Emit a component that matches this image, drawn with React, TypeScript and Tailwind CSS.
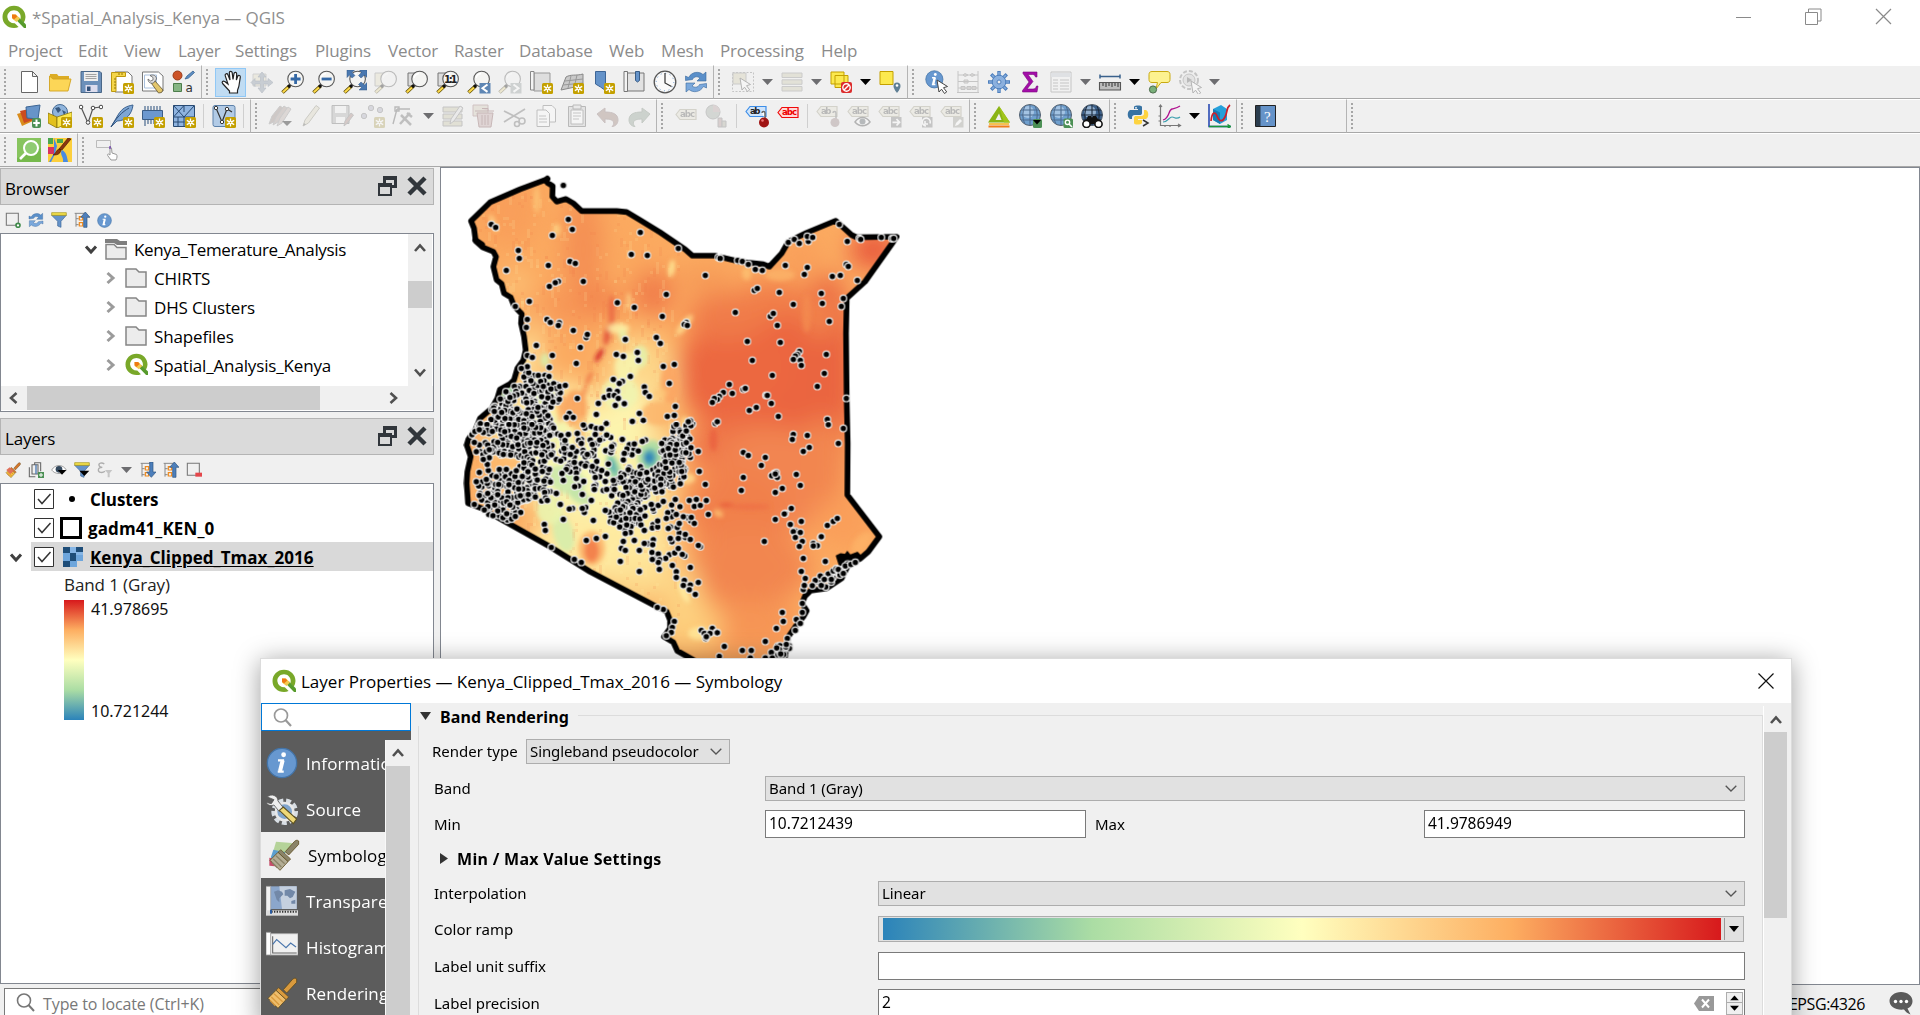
import React from "react";

type Kids = { children?: React.ReactNode };

/* ---------- icon helpers ---------- */

function Svg({ children, off, s = 24 }: Kids & { off?: boolean; s?: number }) {
  return (
    <svg width={s} height={s} viewBox="0 0 24 24" fill="none" className={off ? "shrink-0 opacity-35 grayscale-[55%]" : "shrink-0"}>
      {children}
    </svg>
  );
}

const Star = () => (
  <g>
    <rect x="13" y="13" width="11" height="11" rx="1.5" fill="#c4a000" />
    <path d="M18.5 14.5v8M14.8 16.4l7.4 4.2M14.8 20.6l7.4-4.2" stroke="#fff" strokeWidth="1.3" />
    <circle cx="18.5" cy="18.5" r="1.8" fill="#fff" />
    <circle cx="18.5" cy="18.5" r=".8" fill="#c4a000" />
  </g>
);

const Lens = ({ children }: Kids) => (
  <g>
    <path d="M8.5 16L1.5 22.5" stroke="#5b4a00" strokeWidth="3.6" />
    <path d="M7 17.5L1.8 22.2" stroke="#fcd94a" strokeWidth="2.2" />
    <path d="M9.6 14.4L7.2 17" stroke="#111" strokeWidth="3" />
    <circle cx="14.6" cy="9" r="7.8" fill="#f4f4f2" stroke="#585858" strokeWidth="1.1" />
    <path d="M9 8a6 6 0 0 1 5-4.5" stroke="#fff" strokeWidth="1.4" />
    {children}
  </g>
);

const Tag = ({ f = "#e8e2b8", s = "#a39c6a", t = "#555", label = "abc" }: { f?: string; s?: string; t?: string; label?: string }) => (
  <g>
    <path d="M1 7.5L5 2.500h16v10H5z" fill={f} stroke={s} strokeWidth="1.2" />
    <text x="5" y="10.4" fontSize="8.6" fontWeight="700" fontFamily="DejaVu Sans, sans-serif" textLength={label === "ab" ? 10.5 : 15} fill={t}>{label}</text>
  </g>
);

const Globe = ({ dark }: { dark?: boolean }) => (
  <g>
    <circle cx="12" cy="11" r="10.500" fill={dark ? "#3a5f8a" : "#6f9fce"} stroke="#55606c" />
    <circle cx="10" cy="8" r="6" fill="#b9d3ec" opacity=".7" />
    <path d="M1.500 11h21M3 6h18M3 16h18M12 1v20M7 2c-3 5-3 13 0 18M17 2c3 5 3 13 0 18" stroke={dark ? "#1c2a3c" : "#4d6c90"} strokeWidth="1.1" />
  </g>
);

const Cursor = ({ x = 12, y = 10 }: { x?: number; y?: number }) => (
  <path transform={`translate(${x} ${y})`} d="M0 0l10.5 6.5-4 1.2 3.2 4.2-2.2 1.6-3-4.3L2 12z" fill="#fff" stroke="#444" strokeWidth="1" />
);

const Pencil = () => (
  <g>
    <path d="M4 22l2-6L17 1.5l3.5 2.5L9.500 19z" fill="#e0d7a0" stroke="#8c8660" />
    <path d="M4 22l1-3 2 1.500z" fill="#555" />
  </g>
);

const QLogo = ({ s = 24 }: { s?: number }) => (
  <Svg s={s}>
    <path d="M12 .8C5.500.8.5 5.700.5 12s5 11 11.5 11c1.700 0 3.200-.3 4.600-.9l-3.800-3.800A7 7 0 0 1 5.300 12c0-3.800 3-6.700 6.700-6.700s6.700 2.900 6.700 6.700c0 .9-.1 1.600-.4 2.300l3.400 3.400A11 11 0 0 0 23.500 12C23.500 5.700 18.500.8 12 .8z" fill="#79a829" />
    <path d="M15 12.500v3.200L22 23h2v-3.600l-7-7z" fill="#579b2c" />
    <path d="M10 9.500h4l4 4-3.500 3.500-4.500-3.500z" fill="#f3c94e" />
    <path d="M10 9.500h3.500l1.800 2-3.300 3-2-1.800z" fill="#ee7913" />
  </Svg>
);

const Refresh = () => (
  <g>
    <path d="M1.500 10.500V6l3 1.500C8 1.500 15 1 19 4.500L22 2v9h-9l3-3c-3-2-6-1.500-7.500 1.500z" fill="#5a8fc9" stroke="#39689c" strokeWidth=".6" />
    <path d="M22.500 13.500V18l-3-1.500C16 22.500 9 23 5 19.500L2 22v-9h9l-3 3c3 2 6 1.500 7.500-1.500z" fill="#7aa8dc" stroke="#39689c" strokeWidth=".6" />
  </g>
);

const Info = () => (
  <g>
    <circle cx="12" cy="12" r="11" fill="#6798d0" stroke="#4374a8" />
    <circle cx="13.200" cy="5.800" r="1.800" fill="#fff" />
    <path d="M9 10h3.500l-2 8.500M8.800 18.500h4.500" stroke="#fff" strokeWidth="1.800" />
    <path d="M12.500 10l-2 8" stroke="#fff" strokeWidth="3" />
  </g>
);

const Brush = ({ h = "#d99a3d", b = "#efbe6c" }: { h?: string; b?: string }) => (
  <g>
    <path d="M23 1.500c-1-1-2.500-.5-3.300.5L13 9.500l2.500 2.500L23 4z" fill={h} stroke="#5d4a1d" strokeWidth=".6" />
    <path d="M9.500 8l7.500 7-2 2-7.500-7z" fill={h} stroke="#5d4a1d" strokeWidth=".5" />
    <path d="M7.500 10l7.500 7-6 6.500L1.500 16z" fill={b} stroke="#5d4a1d" strokeWidth=".6" />
    <path d="M4 15l6 6M6 12.500l6.500 6M3 17.500l4 4" stroke={h} />
  </g>
);

const icons: Record<string, React.ReactNode> = {
  new: <path d="M4.500 1.500h11l5 5v16h-16zM15.500 1.500v5h5" fill="#fff" stroke="#666" />,
  open: <><path d="M2 4h7l1.500 2H21v5H2z" fill="#dcac25" /><path d="M1.500 21V6L5 9h18l-3 12z" fill="#fcd657" stroke="#d3a31d" strokeWidth=".9" /></>,
  save: <><path d="M2 1.500h19l1.500 1.500v19.500H2z" fill="#6c90ba" stroke="#4a6788" /><path d="M5 2h14v9H5z" fill="#eee" /><path d="M6.500 4.500h11M6.500 6.500h11M6.500 8.500h11" stroke="#999" strokeWidth=".9" /><path d="M6.500 15h12v7h-12z" fill="#dde" /><path d="M8 16.500h3.500V21H8z" fill="#33527a" /></>,
  layout: <><path d="M5 2h13l4 4v16H5z" fill="#fff" stroke="#777" /><path d="M1.500 2.500h14v4h-9.500v15h-4.500z" fill="#f5d64a" stroke="#bd980f" /><path d="M4 9h2M4 12h2M4 15h2M4 18h2M9 3v2M12 3v2" stroke="#96780a" /><Star /></>,
  report: <><path d="M1.500 2h16l4.500 4v15H1.500z" fill="#fff" stroke="#777" /><path d="M3.500 5h12v13h-12z" stroke="#a9c0dd" /><path d="M14 11l8 9-1.500 2.500-3 .5-7-9.500z" fill="#e3c66b" stroke="#5d5130" strokeWidth=".8" /><path d="M9 5.500l3 2v2.500L9.500 11 7 9c0 3 2 5 5.500 4l3-4c0-3-3-5-6.500-3.500z" fill="#ddd" stroke="#555" strokeWidth=".7" /></>,
  style: <><circle cx="5.500" cy="5.500" r="4.500" fill="#cc5327" stroke="#9a3b19" /><path d="M13 9l2-3 6-5 1.500 1.500-6 5.500z" fill="#5e8fc4" stroke="#37628f" strokeWidth=".8" /><path d="M1.500 13.500h8v8h-8z" fill="#86b584" stroke="#4c7d4b" /><text x="13.500" y="22" fontSize="12" fontFamily="DejaVu Sans" fill="#333">a</text></>,
  hand: <><path d="M10.500 23v-2L3.600 13.500c-1.300-1.700.6-3.200 2.200-1.900L9 14 6.200 5.600c-.5-1.900 2-2.600 2.700-.8L11 10l-.7-7.200c0-1.900 2.600-2 2.900-.1L14 9.500l1-6c.4-1.800 2.800-1.400 2.700.4L17.400 10l1.300-3.700c.7-1.600 2.900-.9 2.600.9L20 15.500c-.3 2-1.200 3.500-1.500 5V23z" fill="#fff" stroke="#222" strokeWidth="1.200" /></>,
  panSel: <><path d="M3 4h13v12H3z" fill="#e8dc9a" stroke="#999" /><path d="M12 2l4 5h-2.500v4H18V8.500l5 4-5 4V14h-4.500v4H16l-4 5-4-5h2.500v-4H5v2.500l-4-4 4-4V11h5.500V7H8z" fill="#6f90b5" stroke="#4b6f99" strokeWidth=".7" /></>,
  zin: <Lens><path d="M14.600 4v10M9.600 9h10" stroke="#3468a5" strokeWidth="2.800" /></Lens>,
  zout: <Lens><path d="M9.600 9h10" stroke="#3468a5" strokeWidth="2.800" /></Lens>,
  zfull: <><Lens /><path d="M4 0h7.500L9 2.500l3 3L9 8 6.500 5 4 7.500zM24 0v7.500L21.500 5 18 8l-2.500-2.500 3-3L16.500 0zM24 20h-8l2.500-2.500-3-3L18 12l3.500 3 2.500-2.500z" fill="#4a78b0" stroke="#31588a" strokeWidth=".5" /></>,
  zsel: <><path d="M1 3h15v13H1z" fill="#e8dfa0" stroke="#888" /><Lens /></>,
  zlay: <><path d="M3 3h13v13H3z" fill="#ddd" stroke="#777" /><Lens /></>,
  znat: <><path d="M2 3h13v13H2z" fill="#ddd" stroke="#777" /><Lens><text x="8" y="13" fontSize="10" fontWeight="700" fontFamily="DejaVu Sans" textLength="13.500" fill="#222">1:1</text></Lens></>,
  zlast: <><Lens /><path d="M12.500 13h11v10.500h-11z" fill="#5e86b4" /><path d="M20.500 14.500l-5 3.700 5 3.700" stroke="#fff" strokeWidth="2" /></>,
  znext: <><Lens /><path d="M12.500 13h11v10.500h-11z" fill="#8a9a9a" /><path d="M15.500 14.500l5 3.700-5 3.700" stroke="#fff" strokeWidth="2" /></>,
  nmap: <><path d="M5 3h16v18H5z" fill="#dedede" stroke="#999" /><path d="M1.500 1.500h3.500v18.500h-3.500z" fill="#f4f4f4" stroke="#888" /><Star /></>,
  mesh: <><path d="M6 7c5-3 10-1 17-3v12l-8 1-14 3z" fill="#c9c9c9" stroke="#888" /><path d="M5 11l18-2M3 15l20-2M11 6L8 18M17 5l-3 13" stroke="#999" /><Star /></>,
  bookn: <><path d="M4.500 1.500h10v19l-5-3.500-5-3z" fill="#6593c9" stroke="#3e6697" /><Star /></>,
  books: <><path d="M5 3h17v18H5z" fill="#e2e2e2" stroke="#777" /><path d="M2 1.500h3.500v20H2z" fill="#f3f3f3" stroke="#777" /><path d="M13.500 1.500h4v9l-2 1.500-2-1.500z" fill="#6593c9" stroke="#2c527e" strokeWidth=".9" /></>,
  clock: <><circle cx="12" cy="12" r="10.800" fill="#fafafa" stroke="#555" strokeWidth="1.300" /><circle cx="12" cy="12" r="8.800" stroke="#6593c9" strokeDasharray="1 3.600" /><path d="M12 3v10l6.500 3.500" stroke="#333" strokeWidth="1.200" /></>,
  refresh: <Refresh />,
  select: <><path d="M1.500 2.500h21v19h-21z" stroke="#777" strokeDasharray="2 1.500" /><path d="M2 3h13v11H2z" fill="#d9cf86" stroke="#888" /><Cursor x={9} y={8} /></>,
  selForm: <path d="M2 3h20v4.500H2zM2 9.800h20v4.500H2zM2 16.500h20v4.500H2z" fill="#d0c88a" stroke="#888" />,
  desel: <><path d="M2 2h13v12H2zM6 5.500h13v12H6z" fill="#fce94f" stroke="#c4a000" /><rect x="12" y="12" width="11" height="11" rx="2" fill="#dc2c2c" /><circle cx="17.500" cy="17.500" r="3.700" stroke="#fff" strokeWidth="1.400" /><path d="M15 20l5-5" stroke="#fff" strokeWidth="1.400" /></>,
  selLoc: <><path d="M2 1.500h13v13H2z" fill="#fce94f" stroke="#c4a000" /><path d="M15.500 16a3.500 3.500 0 1 1 7 0c0 3-3.500 7-3.500 7s-3.500-4-3.500-7z" fill="#5f7f95" /><circle cx="19" cy="15.500" r="1.300" fill="#fff" /></>,
  ident: <><g transform="scale(.78)"><Info /></g><Cursor x={12} y={10} /></>,
  calc: <path d="M2 1v22M22 1v22M1 22.500h22M2 5h20M2 11.500h20M2 18h20M9 3.500l3 1.500-3 1.500-2-1.500zM16 3.500l3 1.500-3 1.500-2-1.500zM8 10h4v3H8zM5 16.500h4v3H5zM11 16.500h4v3h-4zM16 16.500h4v3h-4z" stroke="#777" fill="#e0c8b8" />,
  gear: <><path d="M12 1v22M1 12h22M4.200 4.200l15.600 15.600M4.200 19.800L19.800 4.200" stroke="#4d7fbd" strokeWidth="3.400" /><path d="M12 2v20M2 12h20M5 5l14 14M5 19L19 5" stroke="#83abdc" strokeWidth="1.600" /><circle cx="12" cy="12" r="6.800" fill="#8bb0de" stroke="#4d7fbd" /><circle cx="12" cy="12" r="2" fill="#efefef" stroke="#4d7fbd" /></>,
  sigma: <path d="M5 2h14v5h-1.500c-.5-1.700-1.500-2.500-3-2.500H10l5 7-6 7.500h6c2 0 3-1 3.500-3H20l-1 6H4.500v-1.500L11 12 5 3.500z" fill="#a30ea8" stroke="#7c0a80" strokeWidth=".6" />,
  table: <><path d="M2 2h20v20H2z" fill="#f5f5f5" stroke="#777" /><path d="M2 3h20v4H2z" fill="#b8cad8" /><path d="M4 10h5M11 10h9M4 13h5M11 13h9M4 16h5M11 16h9M4 19h5M11 19h9" stroke="#777" strokeWidth="1.200" /></>,
  measure: <><path d="M2 6.500h20M2 4.500v4M22 4.500v4" stroke="#3a618c" strokeWidth="1.500" /><path d="M1.500 12.500h21v7.500h-21z" fill="#bdbdbd" stroke="#555" strokeWidth="1.100" /><path d="M5 13v3M8 13v4M11 13v3M14 13v4M17 13v3M20 13v4" stroke="#333" /></>,
  tip: <><path d="M5 1.500h15c2 0 3 1 3 3v5c0 2-1 3-3 3h-6L9 19l1.500-6.500H5c-2 0-3-1-3-3v-5c0-2 1-3 3-3z" fill="#fdf290" stroke="#c9aa10" /><circle cx="6" cy="19.500" r="3.600" fill="#79b07a" stroke="#4b6b4b" /></>,
  action: <><circle cx="11" cy="10" r="9" fill="#eee" stroke="#777" strokeWidth="2" strokeDasharray="4 2" /><circle cx="11" cy="10" r="6" fill="#ccc" stroke="#777" /><path d="M9 7l5 3-5 3z" fill="#555" /><Cursor x={13} y={11} /></>,
  dsm: <><path d="M0 10l10-3 6 10-11 5z" fill="#d98c1c" /><path d="M3 7l9-2 4 11-9 3z" fill="#cc4b1f" /><path d="M9 3l14-2-2 14-11-1z" fill="#6794c9" stroke="#3c6594" /><rect x="15" y="14" width="9" height="10" rx="2" fill="#4c9055" /><path d="M19.500 15.500v7M16.200 19h6.600" stroke="#fff" strokeWidth="2" /></>,
  geopkg: <><circle cx="12" cy="8" r="7.500" fill="#8fb4dc" stroke="#466a92" /><path d="M7 4l4-1 2 3-3 3zM14 6l4 2-2 3z" fill="#37587f" /><path d="M0 9l9 4v11l-9-5z" fill="#e2c01d" stroke="#7b6705" strokeWidth=".7" /><path d="M9 13l15-5v10L9 24z" fill="#fbe64b" stroke="#7b6705" strokeWidth=".7" /><Star /></>,
  shp: <><path d="M2 3l7 16 5-15 8-1" stroke="#555" strokeWidth="1.200" /><circle cx="2" cy="3" r="1.800" fill="#fff" stroke="#444" /><circle cx="9" cy="18.500" r="1.800" fill="#fff" stroke="#444" /><circle cx="14" cy="4" r="1.800" fill="#fff" stroke="#444" /><circle cx="22" cy="3" r="1.800" fill="#fff" stroke="#444" /><Star /></>,
  spat: <><path d="M1 23L8 11c4-7 9-9 15-10-1 9-7 16-16 16z" fill="#7ea6d4" stroke="#3d6390" /><path d="M1 23C6 14 12 8 19 4" stroke="#31517a" /><Star /></>,
  mem: <><path d="M4 2v20M7 2v18M10 2v18M13 2v18M16 2v18M19 2v18" stroke="#3b5d86" strokeWidth="1.100" /><path d="M1.500 6.500h20v9h-20z" fill="#6c98cf" stroke="#3b5d86" /><Star /></>,
  meshl: <><path d="M1.500 1.500h21v21h-21z" fill="#8fb4e0" stroke="#284a73" /><path d="M1.500 13h21M12 13L1.500 1.500M12 13L22 2M1.500 13L12 1.500M12 13v10M12 1.500V8M6 13v10M1.500 18h11" stroke="#284a73" /><Star /></>,
  virt: <><rect x="1" y="1.500" width="22" height="21" rx="2" fill="#b2cbe6" stroke="#5c81aa" /><path d="M4 4l6 14 5-13 5 3" stroke="#333" strokeWidth="1.200" /><circle cx="4" cy="4" r="1.700" fill="#fff" stroke="#333" /><circle cx="10" cy="18" r="1.700" fill="#fff" stroke="#333" /><circle cx="15" cy="5" r="1.700" fill="#fff" stroke="#333" /><Star /></>,
  edits: <><path d="M1 20l3-8L12 2l3 2-9 14z" fill="#a47a70" stroke="#888" /><path d="M5 21l3-8L16 2l3 2-9 14z" fill="#b98e83" stroke="#888" /><path d="M9 22l3-8L20 3l3 2-9 14z" fill="#c9a59b" stroke="#888" /><path d="M14 17h10l-5 5z" fill="#000" /></>,
  pencil: <Pencil />,
  savee: <><path d="M2 1.500h17v18H2z" fill="#aaa" stroke="#666" /><path d="M5 2h11v7H5zM6 13h9v6H6z" fill="#f4f4f4" /><path d="M14 22l1-5 6-8 2.500 2-6 8z" fill="#c87b6c" stroke="#777" /></>,
  addf: <><circle cx="10" cy="4" r="2.700" fill="#aac" stroke="#777" /><circle cx="19" cy="6" r="2.700" fill="#aac" stroke="#777" /><circle cx="3" cy="12" r="2.700" fill="#aac" stroke="#777" /><Star /></>,
  vert: <><path d="M5 5h13M5 5L1 20M3 3h4v4H3z" stroke="#555" strokeWidth="1.400" /><path d="M9 11l10 10M18 9L8 20M15 9l5 4" stroke="#666" strokeWidth="2.500" /></>,
  multi: <><path d="M2 3h19v5H2zM2 10h19v5H2zM2 17h19v5H2z" fill="#cfc583" stroke="#777" /><path d="M9 20l1-5L19 2l3 2-9 13z" fill="#ddd" stroke="#777" /></>,
  trash: <><path d="M1 1h15v11H1z" fill="#ddc8a0" stroke="#b66" /><path d="M3 7h19M10 4.500h6V7M5 9h16l-2 14H7zM10 11v10M13 11v10M16 11v10" fill="#d99" stroke="#a44" /></>,
  cut: <><path d="M1 7l16 8M1 18L22 5" stroke="#666" strokeWidth="1.800" /><circle cx="19" cy="17" r="3" stroke="#666" strokeWidth="1.600" /><circle cx="14" cy="20" r="2.500" stroke="#666" strokeWidth="1.600" /></>,
  copy: <><path d="M9 1.500h9l3.500 3.500v13H9z" fill="#fff" stroke="#666" /><path d="M3 6h9l3.500 3.500v13H3z" fill="#fff" stroke="#666" /><path d="M5 12h7M5 15h8M5 18h8" stroke="#777" /></>,
  paste: <><path d="M3.500 2.500h17v20h-17z" fill="#ccc" stroke="#555" /><path d="M6 6h12v14H6z" fill="#fff" stroke="#666" /><path d="M8 1h8v4H8z" fill="#ddd" stroke="#555" /><path d="M8 9h8M8 12h8M8 15h6" stroke="#777" /></>,
  undo: <path d="M1 10l8-6v4c8 0 13 2 13 8 0 4-3 6.500-6 6.500 1.500-1.500 2-3 1.500-4.500-.7-2-3.500-3-8.500-3v4z" fill="#b0735a" stroke="#966" />,
  redo: <path d="M23 10l-8-6v4C7 8 2 10 2 16c0 4 3 6.500 6 6.500-1.500-1.500-2-3-1.500-4.500.7-2 3.500-3 8.500-3v4z" fill="#7fa085" stroke="#686" />,
  tag: <g transform="translate(1 3)"><Tag /></g>,
  pie: <><circle cx="8" cy="8" r="7" fill="#9a9" stroke="#777" /><path d="M8 8V1a7 7 0 0 1 7 7z" fill="#c99" /><path d="M13 14h4v9h-4z" fill="#c88" stroke="#777" /><path d="M17 17h4v6h-4z" fill="#aa8" stroke="#777" /></>,
  tagPin: <><Tag f="#cfe4fb" s="#3d8ee8" t="#222" label="ab" /><path d="M17 9c0-2 3-2 3 0v6" stroke="#666" strokeWidth="1.500" fill="#fff" /><circle cx="19" cy="18.500" r="5" fill="#a01414" /><circle cx="17.500" cy="16.500" r="1.300" fill="#e77" /></>,
  tagRed: <g transform="translate(1 1)"><Tag f="#ffd9d9" s="#f00a0a" t="#e00" /></g>,
  tagPin2: <><Tag label="ab" /><path d="M17 9c0-2 3-2 3 0v6" stroke="#666" strokeWidth="1.500" /><circle cx="19" cy="18.500" r="4.500" fill="#a77" /></>,
  tagEye: <><Tag /><path d="M8 18c4-6 11-6 15 0-4 5-11 5-15 0z" fill="#fff" stroke="#444" strokeWidth="1.500" /><circle cx="15.500" cy="17.500" r="3" fill="#456" /></>,
  tagMove: <><Tag /><rect x="13" y="13" width="10.500" height="10.500" fill="#777" /><path d="M14.500 18.300h7M18.500 15l3 3.300-3 3.200" stroke="#fff" strokeWidth="1.800" /></>,
  tagRot: <><Tag /><rect x="13" y="13" width="10.500" height="10.500" fill="#777" /><path d="M17 22a4 4 0 1 1 4-2.500M16 17v3h3" stroke="#fff" strokeWidth="1.600" /></>,
  tagEd: <><Tag /><rect x="13" y="13" width="10.500" height="10.500" fill="#998" /><path d="M15 22l1-3 4-4 2 2-4 4z" fill="#fff" /></>,
  grass: <><path d="M1 18.500L12 2l11 16.500zM12 9.500L8.500 16h6z" fill="#8ab416" fillRule="evenodd" /><path d="M12 2l11 16.500h-6z" fill="#a2c51b" /><path d="M2 20h20" stroke="#f9b21d" strokeWidth="1.500" /><path d="M1.500 22.500h21" stroke="#f07c1b" strokeWidth="2" /></>,
  web1: <><Globe /><rect x="15" y="15" width="9" height="9" rx="1.500" fill="#4c9055" /><path d="M15 16h8l-4 4.500z" fill="#000" /></>,
  web2: <><Globe /><rect x="14.500" y="14.500" width="9.500" height="9.500" rx="1.500" fill="#4c9055" /><circle cx="18.500" cy="18.300" r="2.200" stroke="#fff" strokeWidth="1.400" /><path d="M20 20l3 3" stroke="#fff" strokeWidth="1.600" /></>,
  web3: <><Globe dark /><path d="M4 20L8 12h3l1 2 1-2h3l5 8z" fill="#111" /><circle cx="6.500" cy="20" r="3.600" fill="#fff" stroke="#111" strokeWidth="1.600" /><circle cx="18.500" cy="20" r="3.600" fill="#fff" stroke="#111" strokeWidth="1.600" /></>,
  py: <><path d="M7 2.500C8 1 14 1 15 2.500V9c0 1.500-1 2-2 2H7.500C6 11 5 12 5 13.500V15H3c-3-1-3-8 0-9h8V5H7z" fill="#3873a3" /><path d="M17 6h2c3 1 3 8 0 9h-8v1h4v3c-1 2-8 2-8 0v-5c0-1.500 1-2 2-2h5.500c1.500 0 2.500-1 2.500-2.500z" fill="#fdd340" /><circle cx="9" cy="3.800" r=".9" fill="#fff" /><path d="M16 16l5 3-5 3" stroke="#333" strokeWidth="1.500" /></>,
  plot: <><path d="M2.500 1v20.500H22M1 3l1.500-2L4 3M20 20l2.500 1.500L20 23M2 17h-1.500M2 12h-1.500M7 22v1M12 22v1" stroke="#777" strokeWidth="1.200" /><path d="M5 18c5 0 6-5 9-5s4 3 8 0" stroke="#3c9fae" strokeWidth="1.200" /><path d="M5 16c7-2 5-10 9-11s5-1 8-3" stroke="#b0128f" strokeWidth="1.300" /></>,
  d3: <><path d="M6 5l8-4 6 4v11l-7 4-7-4z" fill="#26a0da" /><path d="M6 5l7 3.500V20l-7-4z" fill="#147cb6" /><path d="M2 0v22.500h22" stroke="#1d3fae" strokeWidth="1.500" /><path d="M2 22.500h21M20.500 20.500l3 2-3 2" stroke="#18963c" strokeWidth="1.500" /><path d="M4 17c1-9 4-10 6-5s5 7 8 1 1-9 5-12" stroke="#cc1f2a" strokeWidth="1.700" /></>,
  help: <><path d="M1.500 1.500h20v21h-20z" fill="#6593c9" stroke="#222" /><path d="M2 2h4.500v20H2z" fill="#2b3d4e" /><text x="10" y="17.500" fontSize="15" fontFamily="Liberation Serif" fill="#fff">?</text></>,
  loc: <><path d="M0 0h24v24H0z" fill="#76b94c" /><path d="M0 0h24v10L0 20z" fill="#93cc6b" opacity=".6" /><circle cx="14" cy="10" r="7" fill="#8fcb72" stroke="#fff" strokeWidth="2" /><path d="M9 15l-6 6" stroke="#fff" strokeWidth="2.600" /></>,
  osm: <><path d="M0 0h24v24H0z" fill="#fccf3c" /><path d="M0 0h5v6H0zM9 1h6v4H9z" fill="#4aa84e" /><path d="M0 9h6v7H0z" fill="#d8325f" /><path d="M14 12c4 2 5 6 6 12h-5c1-5-4-8-1-12zM6 0l3 8-2 8-4 8H1l5-9z" fill="#4a8be0" /><path d="M23 1L14 12l-3-1 9-11zM13 12c-1 5-5 5-8 5 3-1 3-5 6-6z" fill="#8a3511" stroke="#401500" strokeWidth=".6" /></>,
  rect: <><path d="M1.500 2.500h14v7h-14z" stroke="#bbb" /><path d="M15 10v7l-1.500-1c-1.500 0-1 1.500-.5 2l3 4h5c1-2 1.500-4 .5-5.500l-4.500-1.500-.5-5c-.3-.8-1.500-.8-1.500 0z" fill="#fff" stroke="#999" /><path d="M15 8v3" stroke="#51a" /></>,
};

const offIcons = new Set(["panSel", "zsel", "znext", "select", "selForm", "calc", "table", "action", "edits", "pencil", "savee", "addf", "vert", "multi", "trash", "cut", "copy", "paste", "undo", "redo", "tag", "pie", "tagPin2", "tagEye", "tagMove", "tagRot", "tagEd"]);

function Tool({ n }: { n: string }) {
  if (n === "v" || n === "V")
    return (
      <div className="flex w-[18px] shrink-0 justify-center">
        <svg width="11" height="6" className={n === "V" ? "text-black" : "text-[#6d6d70]"}><path d="M0 0h11L5.500 6z" fill="currentColor" /></svg>
      </div>
    );
  if (n === "|") return <div className="flex w-[9px] shrink-0 justify-center"><div className="h-6 w-px bg-[#cfcfcf]" /></div>;
  return (
    <div className={n === "hand" ? "flex h-[29px] w-[31px] shrink-0 items-center justify-center border border-[#90c8f6] bg-[#c0dcf3]" : "flex w-[31px] shrink-0 justify-center"}>
      <Svg off={offIcons.has(n)}>{icons[n]}</Svg>
    </div>
  );
}

function Group({ w, items = [] }: { w: string; items?: string[] }) {
  return (
    <div className={`flex h-full shrink-0 items-center border-r border-r-[#b4b4b4] border-b border-b-[#a8a8a8] border-t border-t-white bg-[#f0f0f0] pl-[4px] ${w}`}>
      <div className="mr-[7px] h-[26px] w-[2px] shrink-0 bg-[repeating-linear-gradient(to_bottom,#a6a6a6_0_2px,transparent_2px_4px)]" />
      {items.map((n, i) => <Tool key={i} n={n} />)}
    </div>
  );
}

/* ---------- map ---------- */

const outline =
  "M320 58L240 88L150 127L93 183L102 205L107 243L128 262L160 275L168 290L160 320L170 360L185 372L192 400L212 412L222 438L245 462L243 490L252 530L257 570L250 600L232 625L222 660L210 672L180 688L172 715L155 745L120 775L108 805L85 838L80 855L92 890L82 935L80 970L84 1030L125 1045L330 1160L450 1235L640 1335L680 1355L690 1380L690 1405L672 1430L700 1447L712 1473L760 1500L880 1580L1000 1580L1035 1490L1045 1430L1066 1400L1090 1370L1100 1352L1086 1330L1095 1308L1112 1292L1160 1285L1205 1255L1225 1215L1262 1195L1285 1175L1318 1130L1222 1005L1223 850L1220 720L1218 520L1220 415L1275 365L1360 245L1370 230L1250 232L1235 225L1187 182L1100 218L1045 245L1025 280L988 320L970 313L900 305L825 287L757 287L735 268L660 217L600 180L560 156L530 153L425 153L400 130L378 117L350 125L337 110L338 78L322 68Z";

type Blob = [number, number, number, number, string, number?];
const wide: Blob[] = [
  [210, 160, 90, 100, "#f99f5a"], [430, 270, 60, 170, "#f48f52"], [590, 290, 60, 90, "#fba85e"], [640, 400, 60, 70, "#f07a49"],
  [400, 440, 110, 60, "#f79756"], [480, 420, 60, 40, "#f2814b"], [980, 640, 270, 200, "#eb6540"], [880, 620, 170, 130, "#ec6841"], [1160, 640, 90, 300, "#ea6540"],
  [860, 470, 120, 70, "#f07b49"], [800, 360, 90, 40, "#f69a57"], [1000, 420, 110, 60, "#f17e4a"], [1080, 290, 70, 60, "#f99f5a"],
  [1140, 470, 40, 60, "#f48a50"], [1300, 270, 70, 55, "#e8553a"], [900, 860, 190, 80, "#ef7748"], [1010, 960, 190, 160, "#f28551"],
  [1210, 1080, 90, 90, "#fa9f5a"], [1150, 900, 70, 130, "#f28650"], [890, 1050, 150, 130, "#f1804b"], [930, 1220, 180, 120, "#f28650"], [930, 1400, 150, 80, "#f69554"],
  [600, 650, 110, 130, "#fdd588"], [340, 850, 190, 190, "#feeea4"], [470, 940, 190, 140, "#f8f8b4"], [560, 800, 80, 130, "#fdf4ae"], [480, 1150, 220, 110, "#feeaa0"],
  [620, 980, 70, 170, "#fbf0a8"], [640, 1160, 70, 80, "#fee79c"], [600, 1270, 110, 50, "#fddb8d"], [740, 1400, 110, 70, "#fdcb79"], [730, 1300, 50, 90, "#fdd584"],
  [700, 850, 30, 80, "#fdcf80"], [280, 560, 20, 90, "#fee49a"], [230, 370, 30, 26, "#fedd92"], [220, 600, 90, 50, "#fee8a0"],
];
const fine: Blob[] = [
  [695, 325, 10, 26, "#fee795", 8], [733, 495, 12, 38, "#fedb8c", 38], [290, 120, 10, 40, "#fdc375"], [350, 210, 12, 20, "#fdcf80"], [160, 190, 8, 28, "#fed588", -20],
  [515, 460, 10, 55, "#ea6742"], [502, 525, 11, 32, "#e2513a", 12], [478, 585, 8, 24, "#cf1a20", 32], [447, 655, 7, 24, "#ef7847", 25], [430, 700, 8, 26, "#f58e52", 20],
  [566, 425, 5, 28, "#fee99a"], [535, 505, 34, 16, "#fdf0a6"], [550, 530, 14, 22, "#e6f3ac", -20], [600, 590, 24, 34, "#e3f2ac"], [540, 700, 55, 50, "#eff5b0"],
  [205, 705, 24, 34, "#8fd0a3", 30], [315, 600, 14, 22, "#d7eeaa"], [310, 690, 40, 44, "#d5edab"], [320, 810, 60, 50, "#f0f4af"], [360, 730, 10, 60, "#fbae66"], [405, 745, 38, 55, "#f99f5b"], [420, 820, 18, 50, "#fcbf74"],
  [180, 910, 70, 22, "#fdb469"], [105, 970, 14, 60, "#fcb066"], [160, 850, 40, 24, "#fdc67a"], [190, 800, 40, 30, "#f9eea5"], [380, 960, 60, 40, "#c9e8aa", 25], [420, 1010, 36, 20, "#bfe4a8", 30], [370, 1120, 30, 58, "#d4edab", -15],
  [330, 1050, 40, 44, "#e9f4af"], [522, 925, 18, 46, "#8fd1a4", -18], [518, 918, 8, 26, "#4fa8b0", -18], [632, 888, 38, 48, "#a6dca6", 15], [630, 893, 22, 28, "#55adae"], [627, 893, 14, 16, "#2b7fbc"],
  [455, 1165, 40, 52, "#fbb067"], [455, 1172, 22, 34, "#f27a48"], [860, 1035, 22, 6, "#e85a3b"], [930, 1040, 60, 9, "#ee7045"], [835, 1060, 16, 10, "#fdc072", 30], [740, 955, 26, 16, "#fedc8e"],
  [820, 840, 12, 34, "#ea6040"], [730, 1295, 9, 38, "#fff0a5", -25], [735, 795, 12, 26, "#fee596"], [920, 340, 14, 20, "#fdbf72"], [1020, 345, 45, 18, "#fcb368"], [1265, 1150, 40, 22, "#fdb166", -50], [1100, 460, 14, 58, "#f38a50"], [780, 1420, 36, 20, "#ffe799"],
  [560, 620, 36, 44, "#f7f4ae"], [655, 760, 50, 36, "#fbb56b"], [690, 670, 28, 60, "#fba560"], [660, 700, 20, 16, "#fdc87a"],
];

const sparse =
  "370 76 154 193 167 202 385 178 397 208 337 226 235 271 238 295 199 331 325 316 390 304 406 310 430 364 355 364 346 368 328 379 268 424 226 439 262 478 259 502 321 478 331 487 358 488 355 496 400 511 289 556 262 586 277 592 337 586 409 610 421 562 439 532 442 523 328 622 262 620 244 625 601 217 574 283 622 286 715 265 532 428 583 442 679 403 667 469 556 538 649 532 661 550 592 577 595 601 529 583 550 589 670 619 703 613 571 649 520 658 547 664 538 670 613 681 616 697 628 709 688 670 412 715 358 718 376 676 475 730 469 763 493 712 508 691 508 706 532 694 523 706 535 715 553 730 526 736 706 739 682 769 703 766 598 760 610 781 577 784 388 760 400 772 379 772 " +
  "796 346 835 292 841 295 893 301 907 304 925 313 946 328 967 331 1036 316 1045 247 1063 238 1078 250 1105 244 1102 229 1118 232 1198 193 1222 244 1258 235 1262 238 1324 232 1356 236 1361 235 1102 322 1093 343 1177 349 1201 346 1219 313 1225 319 1252 361 943 391 952 385 1018 397 1144 400 1060 433 1147 430 1210 415 1204 439 886 457 991 469 1000 460 1012 496 1168 484 739 487 733 493 742 496 922 544 1021 547 937 601 1078 574 1072 583 1066 588 1060 598 1081 601 1084 616 1159 583 997 646 1153 640 868 673 910 688 916 685 877 700 850 697 838 709 832 718 823 715 817 727 1132 679 978 706 982 706 994 730 928 751 949 742 1015 769 1219 715 1162 778 " +
  "1165 794 1210 805 1060 823 1057 838 1102 826 1108 862 1090 874 1195 850 826 790 832 785 910 877 925 886 976 892 964 916 775 874 778 934 910 952 904 991 796 973 1069 943 1081 976 1027 985 1006 997 1003 940 1000 945 995 947 1009 938 1012 952 1006 942 1054 1045 1036 1060 1033 1062 1006 1078 1051 1093 1084 1084 1066 1113 1060 1115 1081 1117 1066 1132 1087 1144 1078 1159 973 1144 1120 1150 1132 1157 1120 1158 1142 1132 1144 1130 1162 1096 1180 1084 1192 1075 1090 1195 1156 1204 1084 1234 1096 1255 1126 1261 1144 1276 1090 1289 1093 1276 1117 1277 1141 1248 1153 1258 1174 1258 1180 1233 1189 1226 1195 1228 1210 1240 1233 1213 1246 1207 1087 1330 1087 1357 1027 1357 1030 1384 1009 1405 1069 1378 1081 1390 1066 1411 1042 1435 1039 1453 976 1444 1018 1468 1010 1464 994 1477 853 1459 838 1489 907 1471 934 1471 931 1494 976 1494 997 1494 1022 1482 817 1405 829 1417 784 1411 793 1420 797 1435 810 1420 832 1418 799 1430 " +
  "703 1384 697 1402 694 1417 679 1427 670 1348 652 1342 226 1069 313 1093 316 1111 370 1078 460 1081 439 1141 469 1135 496 1129 334 1162 403 1198 424 1207 433 1057 541 1204 598 1234 550 1144 583 1141 544 1165 556 1171 598 1171 613 1150 613 1111 571 1117 556 1120 709 1252 709 1235 658 1228 655 1207 637 1198 697 1216 691 1135 679 1075 655 1036 634 1033 670 1024 706 1018 685 1105 751 1222 775 1267 766 1303 751 1275 748 1289 733 1261 730 1276 709 1252 727 1183 715 1165 781 1160 775 1156 748 1021 769 1018 799 1021 763 1039 781 1036 805 1063 754 1072 763 1090 709 1063 712 1102 715 1135 736 1123 751 1138 730 1070 720 1040 690 885 547 838 553 880 550 900 457 853 454 799 469 805 499 790 484 805 430 795 385 823 412 820 424 850 442 883 409 874 372 865 391 883 397 862 500 825 466 823 515 860 436 918 403 907 379 928 457 919 466 952 496 964 520 961 463 988 427 1003 454 1021 496 1051 523 988 490 991 370 961 366 940 409 955 431 964 361 1033 397 1045 388 1047 437 1042 427 1045 322 1021 349 1000 415 978 404 980 328 928 553 731 718 1090 560 1095 500 988 " +
  "118 937 145 931 178 928 199 928 142 913 109 965 139 958 118 1006 103 1033 148 893 130 898";

function cloud(): [number, number][] {
  let seed = 20161;
  const rnd = () => ((seed = (seed * 16807) % 2147483647) / 2147483647);
  const areas: [number, number, number, number, number, number][] = [
    [295, 690, 75, 52, 90, 20], [235, 770, 115, 65, 210, 25], [160, 850, 85, 55, 80, 30], [250, 840, 90, 60, 110, 0], [205, 985, 90, 48, 105, 0], [280, 965, 60, 68, 65, 0],
    [180, 1040, 65, 38, 50, 20], [475, 840, 60, 50, 18, 0], [430, 910, 60, 40, 20, 0], [500, 960, 45, 60, 20, 0], [585, 975, 52, 60, 85, 0], [640, 960, 60, 40, 52, 0],
    [555, 1065, 50, 42, 85, 0], [700, 870, 45, 40, 46, 0], [690, 940, 50, 46, 52, 0], [735, 810, 42, 34, 20, 0], [730, 860, 30, 60, 26, 0], [690, 1120, 80, 90, 30, 0], [590, 860, 50, 22, 14, -20], [620, 1080, 40, 40, 14, 0],
    [340, 870, 60, 50, 26, 0], [1180, 1250, 65, 16, 16, -35], [1030, 1470, 25, 30, 12, 0],
  ];
  const out: [number, number][] = [];
  for (const [cx, cy, rx, ry, n, rot] of areas) {
    const t = (rot * Math.PI) / 180;
    for (let i = 0; i < n; i++) {
      const a = rnd() * Math.PI * 2, r = Math.sqrt(rnd());
      const u = Math.cos(a) * r * rx, v = Math.sin(a) * r * ry;
      const x = cx + u * Math.cos(t) - v * Math.sin(t), y = cy + u * Math.sin(t) + v * Math.cos(t);
      const tooClose = out.some(([p, q]) => Math.hypot(p - x, q - y) < 6);
      const lake = Math.hypot(x - 628, y - 893) < 36;
      const outside = x < 88 || (y < 840 && x + y * 0.8 < 752) || (y > 1045 && y - 1045 > (x - 110) * 0.53 + 6 && x < 400);
      const gap = x > 95 && x < 235 && y > 888 && y < 925;
      if (!tooClose && !lake && !outside && !gap) out.push([Math.round(x), Math.round(y)]);
    }
  }
  return out;
}

function texture(): [number, number, number, string][] {
  let seed = 77;
  const rnd = () => ((seed = (seed * 16807) % 2147483647) / 2147483647);
  return Array.from({ length: 900 }, () => [
    Math.floor((100 + rnd() * 620) / 9) * 9, Math.floor((80 + rnd() * 1300) / 9) * 9, rnd() > 0.6 ? 27 : 9, rnd() > 0.45 ? "#fff3a8" : "#ee7a48",
  ]);
}

function KenyaMap() {
  const nums = sparse.trim().split(/\s+/).map(Number);
  const pts: [number, number][] = cloud();
  for (let i = 0; i + 1 < nums.length; i += 2) pts.push([nums[i], nums[i + 1]]);
  return (
    <svg width="480" height="500" viewBox="3 24 1440 1500" fill="none">
      <defs>
        <clipPath id="land"><path d={outline} /></clipPath>
        <filter id="soft" x="-80%" y="-80%" width="260%" height="260%"><feGaussianBlur stdDeviation="36" /></filter>
        <filter id="crisp" x="-60%" y="-60%" width="220%" height="220%"><feGaussianBlur stdDeviation="7" /></filter>
      </defs>
      <g clipPath="url(#land)">
        <path d={outline} fill="#fbaa60" />
        <g filter="url(#soft)">{wide.map(([x, y, rx, ry, f], i) => <ellipse key={i} cx={x} cy={y} rx={rx} ry={ry} fill={f} />)}</g>
        <g>{texture().map(([x, y, s, f], i) => <rect key={i} x={x} y={y} width="9" height={s} fill={f} opacity=".14" />)}</g>
        <g filter="url(#crisp)">{fine.map(([x, y, rx, ry, f, r = 0], i) => <ellipse key={i} cx={x} cy={y} rx={rx} ry={ry} fill={f} opacity=".85" transform={`rotate(${r} ${x} ${y})`} />)}</g>
      </g>
      <path d={outline} stroke="#000" strokeWidth="17" strokeLinejoin="round" />
      <path d="M1190 1188l12-6 14 2 6-8 8 10 22-8 10 10-20 14-18 12-10 18-14-12z" fill="#000" stroke="#000" strokeWidth="5" />
      <path d="M106 240l20 14M316 62l6-6" stroke="#000" strokeWidth="18" strokeLinecap="round" />
      {pts.map(([x, y], i) => <circle key={i} cx={x} cy={y} r="10" fill="#000" stroke="#efefef" strokeWidth="3.6" />)}
    </svg>
  );
}

/* ---------- panels ---------- */

function PanelHeader({ title }: { title: string }) {
  return (
    <div className="flex h-[37px] shrink-0 items-center justify-between border border-[#b4b4b4] bg-[#dadada] pr-[6px] pl-[4px]">
      <span className="pt-[4px] text-[17px] tracking-[-0.2px]">{title}</span>
      <div className="flex items-center gap-[9px] pb-px">
        <svg width="21" height="22" viewBox="0 0 21 22"><path d="M6 1h14v12h-5v-3h2V5H9v3H6z" fill="#31363b" /><path d="M2 9h12v11H2z" fill="none" stroke="#31363b" strokeWidth="2" /><path d="M1 8h14v4H1z" fill="#31363b" /></svg>
        <svg width="20" height="20" viewBox="0 0 20 20"><path d="M2 2l16 16M18 2L2 18" stroke="#31363b" strokeWidth="4.500" /></svg>
      </div>
    </div>
  );
}

const Chevron = ({ d, c = "#505050", w = 2.6 }: { d: "u" | "d" | "l" | "r"; c?: string; w?: number }) => {
  const p = { u: "M2 9l5-5.500L12 9", d: "M2 4.500L7 10l5-5.500", l: "M9.500 2L4 7l5.500 5", r: "M4.500 2L10 7l-5.500 5" }[d];
  return <svg width="14" height="14" viewBox="0 0 14 14" className="shrink-0"><path d={p} fill="none" stroke={c} strokeWidth={w} /></svg>;
};

const Folder = ({ open }: { open?: boolean }) => (
  <svg width="22" height="22" viewBox="0 0 22 22">
    {open && <path d="M0 1h12l3 2h7v4H12L9 5H0z" fill="#7f7f7f" />}
    <path d={open ? "M1 6.500h8l3 3h9V21H1z" : "M1 2h10l3 3h7v15H1z"} fill="#ececec" stroke="#858585" strokeWidth="1.500" />
  </svg>
);

const MiniTree = ({ up }: { up?: boolean }) => (
  <Svg s={16}>
    <path d="M1 2h16M3 2v20M3 10h4M3 19h4" stroke="#888" strokeWidth="1.500" /><path d="M8 7h5v5H8zM8 16h5v5H8z" stroke="#f08a1c" strokeWidth="1.800" />
    <path d={up ? "M17 0l7 8h-4.500v15h-5V8H10z" : "M17 23l7-8h-4.500V0h-5v15H10z"} fill="#4d7fbb" stroke="#2f557f" />
  </Svg>
);
const Funnel = ({ drop }: { drop?: boolean }) => <Svg s={16}><path d="M1 5h22l-8 9v9l-5-2v-7z" fill="#6593c9" stroke="#3e6697" /><path d="M1 1h22v4H1z" fill="#f2df4b" stroke="#a29117" />{drop && <path d="M8 13h15l-7.500 8z" fill="#000" />}</Svg>;
const AddSq = ({ minus }: { minus?: boolean }) => <Svg s={16}><path d="M2 2h18v18H2z" stroke="#777" strokeWidth="1.600" />{minus ? <path d="M14 16h10v6H14z" fill="#e4474b" /> : <circle cx="19.500" cy="20" r="3" fill="#fff" stroke="#3f8a4a" strokeWidth="2.500" />}</Svg>;

function TreeRow({ label, open, logo }: { label: string; open?: boolean; logo?: boolean }) {
  return (
    <div className={`flex h-[29px] items-center ${open ? "pl-[83px]" : "pl-[102px]"}`}>
      <Chevron d={open ? "d" : "r"} c={open ? "#404040" : "#9b9b9b"} w={3} />
      <div className={open ? "ml-[7px] flex w-[24px]" : "ml-[8px] flex w-[24px]"}>{logo ? <QLogo s={23} /> : <Folder open={open} />}</div>
      <span className={`ml-[5px] pt-[2px] text-[17px] whitespace-nowrap ${open ? "tracking-[-0.35px]" : "tracking-[-0.15px]"}`}>{label}</span>
    </div>
  );
}

const Check = () => <svg width="20" height="20" viewBox="0 0 20 20"><path d="M.5.500h19v19H.5z" fill="#fff" stroke="#333" /><path d="M4 10l4 4.500L16.500 5" fill="none" stroke="#333" strokeWidth="1.500" /></svg>;

function Browser() {
  return (
    <section className="flex h-[244px] w-[434px] flex-col">
      <PanelHeader title="Browser" />
      <div className="flex h-[28px] shrink-0 items-center gap-[7px] pt-[2px] pl-[5px]">
        <AddSq /><Svg s={16}><Refresh /></Svg><Funnel /><MiniTree up /><Svg s={15}><Info /></Svg>
      </div>
      <div className="flex h-[179px] flex-col border border-[#828790] bg-white">
        <div className="flex h-[152px] shrink-0">
          <div className="flex-1">
            <TreeRow label="Kenya_Temerature_Analysis" open />
            <TreeRow label="CHIRTS" /><TreeRow label="DHS Clusters" /><TreeRow label="Shapefiles" />
            <TreeRow label="Spatial_Analysis_Kenya" logo />
          </div>
          <div className="flex w-[24px] flex-col items-center bg-[#f0f0f0] pt-[8px] pb-[7px]">
            <Chevron d="u" /><div className="mt-[25px] h-[27px] w-full bg-[#cdcdcd]" /><div className="mt-auto flex"><Chevron d="d" /></div>
          </div>
          <div className="w-px bg-white" />
        </div>
        <div className="flex h-[24px] items-center bg-[#f0f0f0] pl-[6px]">
          <Chevron d="l" /><div className="ml-[6px] h-full w-[293px] bg-[#cdcdcd]" /><div className="ml-[66px]"><Chevron d="r" /></div>
        </div>
      </div>
    </section>
  );
}

function Layers() {
  return (
    <section className="mt-[6px] flex h-[566px] w-[434px] flex-col">
      <PanelHeader title="Layers" />
      <div className="flex h-[28px] shrink-0 items-center gap-[7px] pt-[2px] pl-[5px]">
        <Svg s={16}><Brush h="#d4762c" b="#f4c33f" /><path d="M2 12l5-4 6 6-5 4z" fill="#e0705a" /></Svg>
        <Svg s={16}><path d="M2 8v14h9M6 4v14h9V4zM10 4V1h9v13" stroke="#666" strokeWidth="1.600" /><path d="M12 4v14" stroke="#4a79b3" strokeWidth="2" /><rect x="15" y="15" width="9" height="9" fill="#4c9055" /><path d="M19.500 16.500v6M16.500 19.500h6" stroke="#fff" strokeWidth="1.500" /></Svg>
        <Svg s={16}><path d="M1 12C6 3 18 3 23 12c-5 7-17 7-22 0z" fill="#fff" stroke="#777" /><circle cx="12" cy="11" r="5" fill="#33475c" /><path d="M10 12h13l-6.500 7z" fill="#000" /></Svg>
        <Funnel drop />
        <Svg s={16} off><path d="M11 3C7 0 2 2 3 5c.5 2 2 3 5 3-4 0-6 2-6 4 0 4 6 5 10 2" stroke="#333" strokeWidth="2" /><path d="M12 12h11l-4 5v6h-3v-6z" fill="#777" /></Svg>
        <svg width="11" height="6" className="mx-[1px]"><path d="M0 0h11L5.500 6z" fill="#6d6d70" /></svg>
        <MiniTree /><MiniTree up /><AddSq minus />
      </div>
      <div className="flex-1 border border-[#828790] bg-white">
        <div className="flex h-[29px] items-center pl-[33px] font-bold">
          <Check /><div className="ml-[15px] size-[6px] rounded-full bg-black" /><span className="ml-[15px] pt-[3px] text-[17px] tracking-[-0.1px]">Clusters</span>
        </div>
        <div className="flex h-[29px] items-center pl-[33px] font-bold">
          <Check /><div className="ml-[6px] size-[22px] border-3 border-black bg-white" /><span className="ml-[6px] pt-[3px] text-[17px] tracking-[0.1px]">gadm41_KEN_0</span>
        </div>
        <div className="flex h-[29px] items-center font-bold">
          <div className="flex w-[30px] justify-center"><Chevron d="d" c="#404040" w={3} /></div>
          <div className="flex h-full flex-1 items-center bg-[#d9d9d9] pl-[3px]">
            <Check />
            <svg width="20" height="20" viewBox="0 0 20 20" className="ml-[9px]">
              <path d="M0 0h20v14h-6v6H0z" fill="#6ea6dc" /><path d="M0 0h7v6H0zM13 0h7v5h-7zM7 6h6v8H7zM0 14h7v6H0z" fill="#1f4e79" /><path d="M7 0h6v6H7zM13 5h7v3h-7z" fill="#86b6e6" />
            </svg>
            <span className="ml-[7px] pt-[3px] text-[17px] tracking-[0.05px] underline underline-offset-2">Kenya_Clipped_Tmax_2016</span>
          </div>
        </div>
        <div className="h-[29px] pl-[63px] text-[17px] leading-[28px] tracking-[-0.1px] text-[#222]">Band 1 (Gray)</div>
        <div className="flex pl-[63px] font-['Noto_Sans','Open_Sans',sans-serif] text-[16px] text-[#111]">
          <div className="h-[120px] w-[20px] bg-[linear-gradient(to_top,#2b83ba,#abdda4_25%,#ffffbf_50%,#fdae61_75%,#d7191c)]" />
          <div className="flex h-[120px] flex-col justify-between pl-[7px] leading-[18px]"><span>41.978695</span><span>10.721244</span></div>
        </div>
      </div>
    </section>
  );
}

/* ---------- layer properties dialog ---------- */

const side: { label: string; icon: React.ReactNode; on?: boolean }[] = [
  { label: "Information", icon: <Info /> },
  { label: "Source", icon: <><circle cx="14" cy="14" r="8" stroke="#d8dee4" strokeWidth="4" strokeDasharray="3.500 2" /><circle cx="14" cy="14" r="6.500" fill="#7fa4cc" stroke="#e8e8e8" strokeWidth="2" /><path d="M1 3c3-3 8-1 8 3l4 5-3 3-4-5C3 10 1 9 0 7l4 1 2-3z" fill="#eee" stroke="#555" strokeWidth=".6" /><path d="M10 13l3-2.500 10 9-2.500 3.500z" fill="#eed877" stroke="#5c5020" strokeWidth=".8" /></> },
  { label: "Symbology", on: true, icon: <><path d="M6 2l12 1-2 8-12-2z" fill="#b5d399" /><path d="M4 8l9 2-2 6-9-2z" fill="#5b9fd0" /><path d="M1 14l9 2 1 5-10-1z" fill="#c74d6a" /><Brush h="#8b8468" b="#b3ad94" /></> },
  { label: "Transparency", icon: <><path d="M3 1h20v17H3z" fill="#8ba6cb" /><path d="M10 1h13v17H12z" fill="#c5d0df" /><path d="M6 5l3-1 3 1 1 2-3 3v3l-2-2-1-3zM14 4l4-1 4 2-2 4-2 1-2-2-2 0zM19 12l3-1v3h-3z" fill="#7288a8" /><path d="M0 1h3.500v20H0z" fill="#f2f2f2" stroke="#999" strokeWidth=".5" /><path d="M0 19h24v4H0z" fill="#ddd" /><path d="M4 20h20" stroke="#333" strokeDasharray="1 1" strokeWidth="1.500" /><path d="M3 18.500h1.500v3H3z" fill="#2a5ba0" /></> },
  { label: "Histogram", icon: <><path d="M3 2h21v16H3z" fill="#f1f1f1" stroke="#aaa" strokeWidth=".6" /><path d="M0 1h3.500v17H0z" fill="#fff" stroke="#999" strokeWidth=".6" /><path d="M5 4v12.500h18" stroke="#666" strokeWidth=".8" /><path d="M5 10l3-3.500 7 6 3.500-3.500 4 3" stroke="#4b77ad" strokeWidth=".9" /></> },
  { label: "Rendering", icon: <Brush /> },
];

const Combo = ({ w, children }: Kids & { w: string }) => (
  <div className={`flex h-[25px] shrink-0 items-center justify-between border border-[#adadad] bg-[#e1e1e1] pr-[7px] pl-[3px] ${w}`}>
    <span className="tracking-[-0.1px] whitespace-nowrap">{children}</span>
    <svg width="12" height="7" viewBox="0 0 12 7"><path d="M.7.700L6 6 11.300.7" fill="none" stroke="#555" strokeWidth="1.300" /></svg>
  </div>
);
const Field = ({ w, children }: Kids & { w: string }) => (
  <div className={`flex h-[28px] shrink-0 items-center border border-[#7a7a7a] bg-white pl-[3px] text-[15.500px] ${w}`}>{children}</div>
);
const Row = ({ label, h, lw = "w-[444px]", children }: Kids & { label: string; h: string; lw?: string }) => (
  <div className={`flex items-center pl-[16px] ${h}`}><span className={`shrink-0 ${lw}`}>{label}</span>{children}</div>
);

function Dialog() {
  return (
    <div className="absolute top-[658px] left-[260px] flex h-[370px] w-[1532px] flex-col border border-[#dcdcdc] bg-[#f0f0f0] shadow-[0_3px_24px_rgba(0,0,0,0.38)]">
      <div className="flex h-[44px] shrink-0 items-center bg-white pr-[17px] pl-[11px]">
        <QLogo s={24} />
        <span className="ml-[5px] flex-1 pt-px text-[17px]">Layer Properties — Kenya_Clipped_Tmax_2016 — Symbology</span>
        <svg width="16" height="16" viewBox="0 0 16 16"><path d="M.5.500l15 15M15.500.500l-15 15" stroke="#111" strokeWidth="1.200" /></svg>
      </div>
      <div className="flex min-h-0 flex-1">
        <div className="flex w-[150px] shrink-0 flex-col bg-[#5c5c5c]">
          <div className="flex h-[28px] shrink-0 items-center border border-[#0078d7] bg-white pl-[11px]">
            <svg width="19" height="19" viewBox="0 0 19 19"><circle cx="8" cy="7.500" r="6.500" fill="none" stroke="#999" strokeWidth="1.700" /><path d="M12.500 12l5.500 6" stroke="#999" strokeWidth="2.200" /></svg>
          </div>
          <div className="flex min-h-0 flex-1 pt-[9px]">
            <div className="w-[124px] overflow-hidden text-[17px] tracking-[0.1px] text-white">
              {side.map((s) => (
                <div key={s.label} className={`flex h-[46px] items-center pl-[5px] ${s.on ? "bg-[#f0f0f0] text-black" : ""}`}>
                  <div className={s.on ? "ml-[2px] shrink-0" : "shrink-0"}><Svg s={32}>{s.icon}</Svg></div>
                  <span className="ml-[8px] pt-[2px] whitespace-nowrap">{s.label}</span>
                </div>
              ))}
            </div>
            <div className="flex w-[25px] flex-col items-center border-l border-[#f8f8f8] bg-[#f0f0f0] pt-[7px]"><Chevron d="u" /><div className="mt-[5px] w-full flex-1 bg-[#cdcdcd]" /></div>
            <div className="w-px bg-[#f0f0f0]" />
          </div>
        </div>
        <div className="relative ml-[7px] w-[1345px] shrink-0 font-['Noto_Sans','Open_Sans',sans-serif] text-[15px]">
          <div className="absolute top-[12px] right-0 bottom-0 left-[160px] border-t border-r border-[#dcdcdc]" />
          <div className="absolute top-[23px] bottom-0 left-0 border-l border-[#dcdcdc]" />
          <div className="relative flex h-[27px] items-center pl-[2px] font-bold">
            <svg width="11" height="9"><path d="M0 0h11L5.500 8z" fill="#333" /></svg>
            <span className="ml-[9px] bg-[#f0f0f0] pr-2 text-[16px] tracking-[0.1px]">Band Rendering</span>
          </div>
          <div className="relative flex h-[43px] items-center pl-[14px]"><span className="w-[94px]">Render type</span><Combo w="w-[204px]">Singleband pseudocolor</Combo></div>
          <div className="relative">
            <Row label="Band" h="h-[31px]" lw="w-[331px]"><Combo w="w-[980px]">Band 1 (Gray)</Combo></Row>
            <Row label="Min" h="h-[40px]" lw="w-[331px]"><Field w="w-[321px]">10.7212439</Field><span className="w-[338px] shrink-0 pl-[9px]">Max</span><Field w="w-[321px]">41.9786949</Field></Row>
            <div className="flex h-[29px] items-center pl-[22px] font-bold"><svg width="8" height="12"><path d="M0 0v11l8-5.500z" fill="#333" /></svg><span className="ml-[9px] text-[16px] tracking-[0.3px]">Min / Max Value Settings</span></div>
            <Row label="Interpolation" h="h-[41px]"><Combo w="w-[867px]">Linear</Combo></Row>
            <Row label="Color ramp" h="h-[30px]">
              <div className="flex h-[26px] w-[866px] border border-[#adadad] bg-[#e1e1e1] p-[1px] pl-[4px]">
                <div className="flex-1 bg-[linear-gradient(to_right,#2b83ba,#abdda4_25%,#ffffbf_50%,#fdae61_75%,#d7191c)]" />
                <div className="ml-[3px] flex w-[18px] items-center justify-center border-l border-[#999]"><svg width="10" height="6"><path d="M0 0h10L5 6z" /></svg></div>
              </div>
            </Row>
            <Row label="Label unit suffix" h="h-[44px]"><Field w="w-[867px]" /></Row>
            <Row label="Label precision" h="h-[30px]">
              <Field w="w-[867px]">
                <span className="flex-1">2</span>
                <svg width="20" height="15" viewBox="0 0 20 15"><path d="M5 0h15v15H5L0 7.500z" fill="#999" /><path d="M8 3.500l7 8M15 3.500l-7 8" stroke="#fff" strokeWidth="2" /></svg>
                <div className="mr-px ml-[12px] flex h-[23px] w-[17px] flex-col divide-y divide-[#adadad] border border-[#adadad] bg-[#f0f0f0]">
                  <svg className="h-1/2 w-full" viewBox="0 0 15 10"><path d="M3 7.500h9l-4.500-5z" /></svg><svg className="h-1/2 w-full" viewBox="0 0 15 10"><path d="M3 2.500h9l-4.500 5z" /></svg>
                </div>
              </Field>
            </Row>
          </div>
        </div>
        <div className="mt-[3px] flex w-[24px] flex-col items-center border-l border-white pt-[8px]"><Chevron d="u" /><div className="mt-[4px] h-[186px] w-full shrink-0 bg-[#cdcdcd]" /></div>
      </div>
    </div>
  );
}

const menu: [string, string][] = [
  ["Project", "w-[70px]"], ["Edit", "w-[46px]"], ["View", "w-[54px]"], ["Layer", "w-[57px]"], ["Settings", "w-[80px]"], ["Plugins", "w-[73px]"], ["Vector", "w-[66px]"],
  ["Raster", "w-[65px]"], ["Database", "w-[90px]"], ["Web", "w-[52px]"], ["Mesh", "w-[59px]"], ["Processing", "w-[101px]"], ["Help", "w-[50px]"],
];

export default function App() {
  return (
    <div className="relative flex h-[1015px] w-[1920px] flex-col overflow-hidden bg-[#f0f0f0] font-['Open_Sans','Noto_Sans',sans-serif] text-black">
      <header className="flex h-[34px] shrink-0 items-center bg-white pl-[2px]">
        <QLogo s={24} />
        <span className="ml-[6px] flex-1 pt-px text-[17px] tracking-[-0.08px] text-[#8f8f8f]">*Spatial_Analysis_Kenya — QGIS</span>
        <div className="flex items-center gap-[53px] pr-[28px] pb-px text-[#8a8a8a]">
          <svg width="16" height="16"><path d="M0 8.500h15" stroke="currentColor" /></svg>
          <svg width="17" height="17" fill="none"><path d="M.5 4.500h12v12H.5zM3.500 4V1h12.500v12h-3" stroke="currentColor" /></svg>
          <svg width="17" height="17"><path d="M1 1l15 15M16 1L1 16" stroke="currentColor" strokeWidth="1.200" /></svg>
        </div>
      </header>
      <nav className="flex h-[31px] shrink-0 items-center bg-white pt-[2px] pl-[8px] text-[17px] tracking-[-0.15px] text-[#8b8b8b]">
        {menu.map(([m, w]) => <span key={m} className={`shrink-0 ${w}`}>{m}</span>)}
      </nav>
      <div className="flex h-[34px] shrink-0 overflow-hidden">
        <Group w="w-[202px]" items={["new", "open", "save", "layout", "report", "style"]} />
        <Group w="w-[512px]" items={["hand", "panSel", "zin", "zout", "zfull", "zsel", "zlay", "znat", "zlast", "znext", "nmap", "mesh", "bookn", "books", "clock", "refresh"]} />
        <Group w="w-[194px]" items={["select", "v", "selForm", "v", "desel", "V", "selLoc"]} />
        <Group w="w-[1013px]" items={["ident", "calc", "gear", "sigma", "table", "v", "measure", "V", "tip", "action", "v"]} />
      </div>
      <div className="flex h-[34px] shrink-0 overflow-hidden">
        <Group w="w-[251px]" items={["dsm", "geopkg", "shp", "spat", "mem", "meshl", "|", "virt", "|"]} />
        <Group w="w-[406px]" items={["edits", "pencil", "savee", "addf", "vert", "v", "multi", "trash", "cut", "copy", "paste", "undo", "redo"]} />
        <Group w="w-[313px]" items={["tag", "pie", "|", "tagPin", "tagRed", "|", "tagPin2", "tagEye", "tagMove", "tagRot", "tagEd"]} />
        <Group w="w-[140px]" items={["grass", "web1", "web2", "web3"]} />
        <Group w="w-[127px]" items={["py", "plot", "V", "d3"]} />
        <Group w="w-[110px]" items={["help"]} />
        <Group w="w-[574px]" />
      </div>
      <div className="flex h-[34px] shrink-0 overflow-hidden">
        <Group w="w-[78px]" items={["loc", "osm"]} />
        <Group w="w-[1843px]" items={["rect"]} />
      </div>
      <main className="flex h-[818px] shrink-0">
        <div className="w-[440px] shrink-0 pt-px"><Browser /><Layers /></div>
        <div className="h-[818px] w-[1480px] shrink-0 overflow-hidden border border-[#828790] bg-white"><KenyaMap /></div>
      </main>
      <footer className="flex flex-1 items-end justify-between">
        <div className="ml-[4px] flex h-[27px] w-[420px] items-center border border-b-0 border-[#7a7a7a] bg-white pl-[11px]">
          <svg width="19" height="19" viewBox="0 0 19 19"><circle cx="8" cy="7.500" r="6.500" fill="none" stroke="#777" strokeWidth="1.600" /><path d="M12.500 12l5.500 6" stroke="#777" strokeWidth="2" /></svg>
          <span className="ml-[8px] pt-[3px] text-[16px] tracking-[-0.1px] text-[#787878]">Type to locate (Ctrl+K)</span>
        </div>
        <div className="flex h-[24px] items-center pr-[7px] text-[16px]">
          <span className="pt-px tracking-[-0.4px]">EPSG:4326</span>
          <svg width="24" height="24" viewBox="0 0 24 24" className="ml-[24px]"><path d="M12 1c6.500 0 11.500 4 11.500 9 0 4-2.500 6.500-5 7.500l3 6c-3-1-5-3-6.500-5C7 19.500.5 15.500.5 10 .5 5 5.500 1 12 1z" fill="#5a5a5a" /><circle cx="6.500" cy="10.500" r="1.700" fill="#fff" /><circle cx="12" cy="10.500" r="1.700" fill="#fff" /><circle cx="17.500" cy="10.500" r="1.700" fill="#fff" /></svg>
        </div>
      </footer>
      <Dialog />
    </div>
  );
}
